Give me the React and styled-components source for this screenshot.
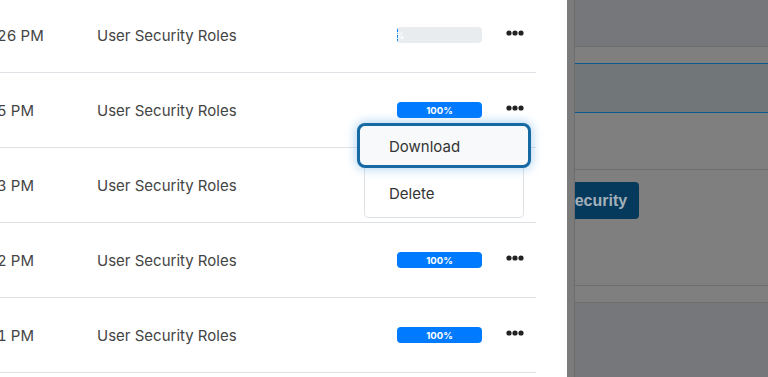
import React from "react";
import styled, { createGlobalStyle } from "styled-components";

const rows = [
	{ id: 1, time: "Jan 10, 2024 4:26 PM", name: "User Security Roles", progress: 1 },
	{ id: 2, time: "Jan 9, 2024 4:25 PM", name: "User Security Roles", progress: 100, menuOpen: true },
	{ id: 3, time: "Jan 9, 2024 4:23 PM", name: "User Security Roles", progress: 100 },
	{ id: 4, time: "Jan 9, 2024 4:22 PM", name: "User Security Roles", progress: 100 },
	{ id: 5, time: "Jan 9, 2024 4:21 PM", name: "User Security Roles", progress: 100 },
	{ id: 6, time: "Jan 9, 2024 4:20 PM", name: "User Security Roles", progress: 100 },
];

const DotsIcon = () => (
	<svg width="18" height="6" viewBox="0 0 18 6">
		<circle cx="3" cy="3" r="2.6" fill="#222" />
		<circle cx="9" cy="3" r="2.6" fill="#222" />
		<circle cx="15" cy="3" r="2.6" fill="#222" />
	</svg>
);

const App = () => {
	return (
		<>
			<GlobalStyle />
			<Screen>
				<Panel>
					<Table>
						{rows.map((row) => (
							<Row key={row.id}>
								<TimeCell>{row.time}</TimeCell>
								<NameCell>{row.name}</NameCell>
								<Progress>
									<ProgressFill style={{ width: `${row.progress}%` }}>
										{row.progress}%
									</ProgressFill>
								</Progress>
								<ActionButton>
									<DotsIcon />
								</ActionButton>
								{row.menuOpen && (
									<Menu>
										<MenuItem active>Download</MenuItem>
										<MenuItem>Delete</MenuItem>
									</Menu>
								)}
							</Row>
						))}
					</Table>
				</Panel>
				<ScrollStrip />
				<Backdrop>
					<PageHeader />
					<Band />
					<SelectedBand />
					<Band tall />
					<ButtonSection>
						<PrimaryButton>Security</PrimaryButton>
					</ButtonSection>
					<Band />
					<PageFooter />
				</Backdrop>
			</Screen>
		</>
	);
};

export default App;

const GlobalStyle = createGlobalStyle`
	html, body {
		margin: 0;
		padding: 0;
		overflow: hidden;
	}
	body {
		font-family: Inter, "Noto Sans", sans-serif;
	}
`;

const Screen = styled.div`
	display: flex;
	width: 768px;
	height: 377px;
	overflow: hidden;
`;

const Panel = styled.div`
	width: 567px;
	flex-shrink: 0;
	background: #fff;
	overflow: hidden;
`;

const Table = styled.div`
	margin-top: -2px;
	width: 536px;
`;

const Row = styled.div`
	position: relative;
	display: flex;
	align-items: center;
	box-sizing: border-box;
	height: 75px;
	border-bottom: 1px solid #dee2e6;
	font-size: 15px;
	color: #444;
`;

const TimeCell = styled.div`
	flex-shrink: 0;
	width: 160px;
	margin-left: -117px;
	margin-right: 54px;
	white-space: nowrap;
	font-variant-numeric: tabular-nums;
`;

const NameCell = styled.div`
	width: 300px;
	white-space: nowrap;
`;

const Progress = styled.div`
	display: flex;
	flex-shrink: 0;
	width: 85px;
	height: 16px;
	border-radius: 4px;
	background: #e9ecef;
	overflow: hidden;
`;

const ProgressFill = styled.div`
	display: flex;
	justify-content: center;
	align-items: center;
	background: #007bff;
	color: #fff;
	font-size: 9.5px;
	font-weight: 700;
	white-space: nowrap;
`;

const ActionButton = styled.div`
	display: flex;
	margin-left: 24px;
	margin-top: -4px;
`;

const Menu = styled.div`
	position: absolute;
	z-index: 5;
	top: 50px;
	left: 364px;
	width: 160px;
	box-sizing: border-box;
	background: #fff;
	border: 1px solid #dee2e6;
	border-radius: 4px;
`;

const MenuItem = styled.div`
	display: flex;
	align-items: center;
	box-sizing: border-box;
	height: ${({ active }) => (active ? "45px" : "49px")};
	margin: ${({ active }) => (active ? "-1px -8px 0" : "0")};
	padding: ${({ active }) => (active ? "2px 0 0 29px" : "2px 0 0 24px")};
	border: ${({ active }) => (active ? "3px solid #1669a3" : "none")};
	border-radius: ${({ active }) => (active ? "8px" : "0")};
	background: ${({ active }) => (active ? "#f8f9fa" : "transparent")};
	box-shadow: ${({ active }) =>
		active ? "0 0 10px 2px rgba(60, 150, 220, 0.35)" : "none"};
	font-size: 15px;
	color: #333;
`;

const ScrollStrip = styled.div`
	width: 7px;
	flex-shrink: 0;
	background: #7b7b7b;
	border-right: 1px solid #6c6c6c;
`;

const Backdrop = styled.div`
	flex: 1;
	display: flex;
	flex-direction: column;
	background: #7f7f7f;
	overflow: hidden;
`;

const PageHeader = styled.div`
	height: 46px;
	background: #76777a;
	border-bottom: 1px solid #6c6c6c;
`;

const Band = styled.div`
	height: ${({ tall }) => (tall ? "56px" : "16px")};
	border-bottom: 1px solid #6e6e6e;
`;

const SelectedBand = styled.div`
	height: 48px;
	background: #717779;
	border-top: 1px solid #0b5a8c;
	border-bottom: 1px solid #0b5a8c;
	margin-top: -1px;
`;

const ButtonSection = styled.div`
	height: 116px;
	padding-top: 12px;
	box-sizing: border-box;
	border-bottom: 1px solid #6e6e6e;
`;

const PrimaryButton = styled.div`
	display: inline-flex;
	align-items: center;
	height: 37px;
	padding: 0 12px;
	margin-left: -23px;
	border-radius: 4px;
	background: #053a5c;
	color: #a4b0ba;
	font-family: "Liberation Sans", Arial, sans-serif;
	font-weight: 700;
	font-size: 16px;
`;

const PageFooter = styled.div`
	flex: 1;
	background: #76777a;
`;
